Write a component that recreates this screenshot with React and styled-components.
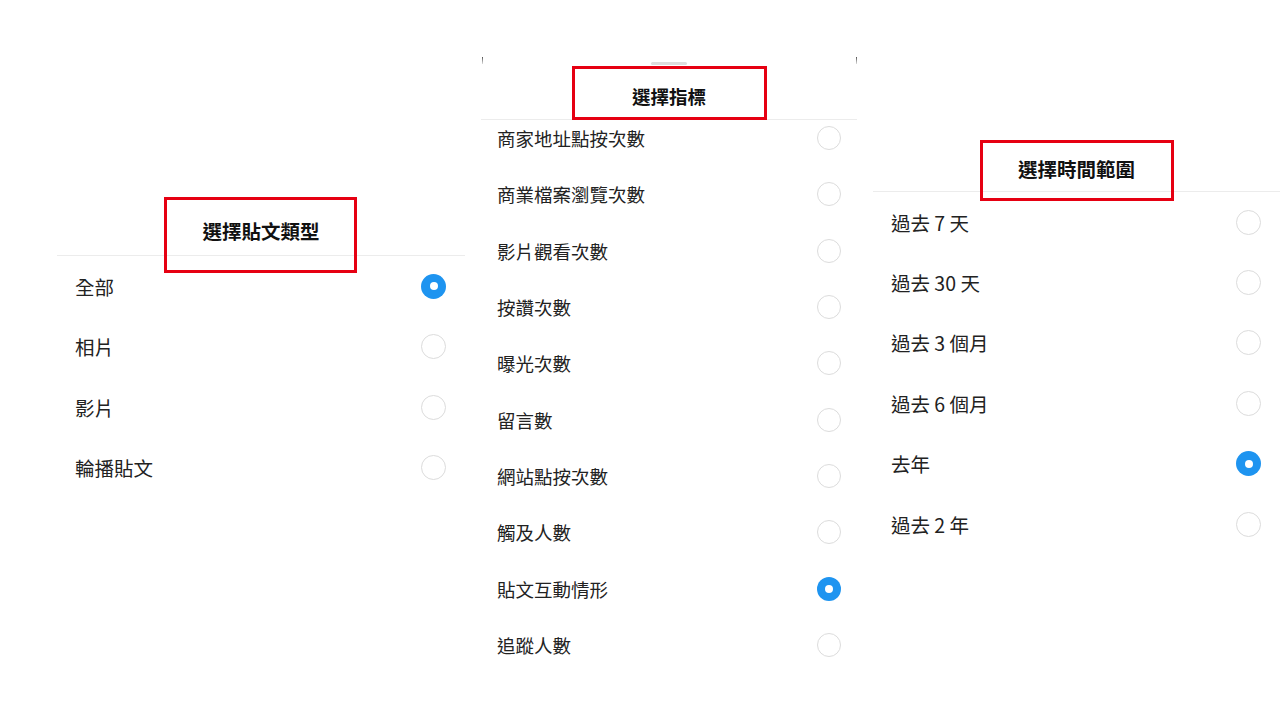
import React from "react";
import styled, { createGlobalStyle } from "styled-components";

const Global = createGlobalStyle`
  html, body { margin: 0; padding: 0; background: #fff; }
  body {
    width: 1280px; height: 720px; overflow: hidden;
    font-family: "Noto Sans CJK TC", "Noto Sans", "Liberation Sans", sans-serif;
    color: #222;
  }
`;

const Page = styled.div`
  display: flex;
  align-items: flex-start;
  gap: 16px;
  padding-left: 57px;
  width: 1280px;
  box-sizing: border-box;
`;

const Panel = styled.section`
  position: relative;
  width: ${(p) => p.$w}px;
  margin-top: ${(p) => p.$top}px;
  flex: none;
  background: #fff;
`;

const SheetPanel = styled(Panel)`
  &::before, &::after {
    content: "";
    position: absolute;
    top: 0;
    width: 1px;
    height: 7px;
    background: linear-gradient(#555, #ddd);
  }
  &::before { left: 1px; }
  &::after { right: 0; }
`;

const Handle = styled.div`
  position: absolute;
  top: 5px;
  left: 50%;
  margin-left: -18px;
  width: 36px;
  height: 3px;
  border-radius: 2px;
  background: #ddd;
`;

const Header = styled.header`
  position: relative;
  height: ${(p) => p.$h}px;
  box-sizing: border-box;
  padding-top: ${(p) => p.$pt}px;
  display: flex;
  justify-content: center;
  align-items: flex-start;
  border-bottom: 1px solid #ececec;
`;

const Title = styled.h2`
  margin: 0;
  font-size: ${(p) => p.$fs}px;
  line-height: 24px;
  font-weight: 700;
  color: #111;
`;

const Highlight = styled.div`
  position: absolute;
  left: ${(p) => p.$x}px;
  top: ${(p) => p.$y}px;
  width: ${(p) => p.$w}px;
  height: ${(p) => p.$h}px;
  box-sizing: border-box;
  border: 3px solid #e60012;
  pointer-events: none;
  z-index: 2;
`;

const ListViewport = styled.div`
  overflow: hidden;
`;

const List = styled.ul`
  list-style: none;
  margin: ${(p) => p.$offset || 0}px 0 0;
  padding: 0;
`;

const Row = styled.li`
  height: ${(p) => p.$h}px;
  display: flex;
  align-items: center;
  justify-content: space-between;
  padding: 0 ${(p) => p.$pr}px 0 ${(p) => p.$pl}px;
  font-size: ${(p) => p.$fs}px;
  color: #222;
`;

const Radio = styled.span`
  width: ${(p) => p.$size}px;
  height: ${(p) => p.$size}px;
  border-radius: 50%;
  box-sizing: border-box;
  flex: none;
  display: flex;
  align-items: center;
  justify-content: center;
  border: ${(p) => (p.$on ? "none" : "1.5px solid #dcdcdc")};
  background: ${(p) => (p.$on ? "#1e94f0" : "#fff")};
  &::after {
    content: "";
    display: ${(p) => (p.$on ? "block" : "none")};
    width: 8px;
    height: 8px;
    border-radius: 50%;
    background: #fff;
  }
`;

const leftItems = [
  { t: "全部", on: true },
  { t: "相片" },
  { t: "影片" },
  { t: "輪播貼文" },
];

const midItems = [
  { t: "商家地址點按次數" },
  { t: "商業檔案瀏覽次數" },
  { t: "影片觀看次數" },
  { t: "按讚次數" },
  { t: "曝光次數" },
  { t: "留言數" },
  { t: "網站點按次數" },
  { t: "觸及人數" },
  { t: "貼文互動情形", on: true },
  { t: "追蹤人數" },
];

const rightItems = [
  { t: "過去 7 天" },
  { t: "過去 30 天" },
  { t: "過去 3 個月" },
  { t: "過去 6 個月" },
  { t: "去年", on: true },
  { t: "過去 2 年" },
];

export default function App() {
  return (
    <>
      <Global />
      <Page>
        <Panel $w={408} $top={192}>
          <Header $h={64} $pt={27}>
            <Title $fs={19.5}>選擇貼文類型</Title>
            <Highlight $x={107} $y={5} $w={193} $h={76} />
          </Header>
          <List>
            {leftItems.map((it) => (
              <Row key={it.t} $h={60.5} $pl={18} $pr={19} $fs={19.5}>
                <span>{it.t}</span>
                <Radio $size={25} $on={it.on} />
              </Row>
            ))}
          </List>
        </Panel>

        <SheetPanel $w={376} $top={57}>
          <Handle />
          <Header $h={63} $pt={27}>
            <Title $fs={18.5}>選擇指標</Title>
            <Highlight $x={91} $y={9} $w={195} $h={54} />
          </Header>
          <ListViewport>
            <List $offset={-10}>
              {midItems.map((it) => (
                <Row key={it.t} $h={56.3} $pl={16} $pr={16} $fs={18.5}>
                  <span>{it.t}</span>
                  <Radio $size={24} $on={it.on} />
                </Row>
              ))}
            </List>
          </ListViewport>
        </SheetPanel>

        <Panel $w={407} $top={128}>
          <Header $h={64} $pt={29}>
            <Title $fs={19.5}>選擇時間範圍</Title>
            <Highlight $x={107} $y={12} $w={194} $h={61} />
          </Header>
          <List>
            {rightItems.map((it) => (
              <Row key={it.t} $h={60.4} $pl={18} $pr={19} $fs={19.5}>
                <span>{it.t}</span>
                <Radio $size={25} $on={it.on} />
              </Row>
            ))}
          </List>
        </Panel>
      </Page>
    </>
  );
}
